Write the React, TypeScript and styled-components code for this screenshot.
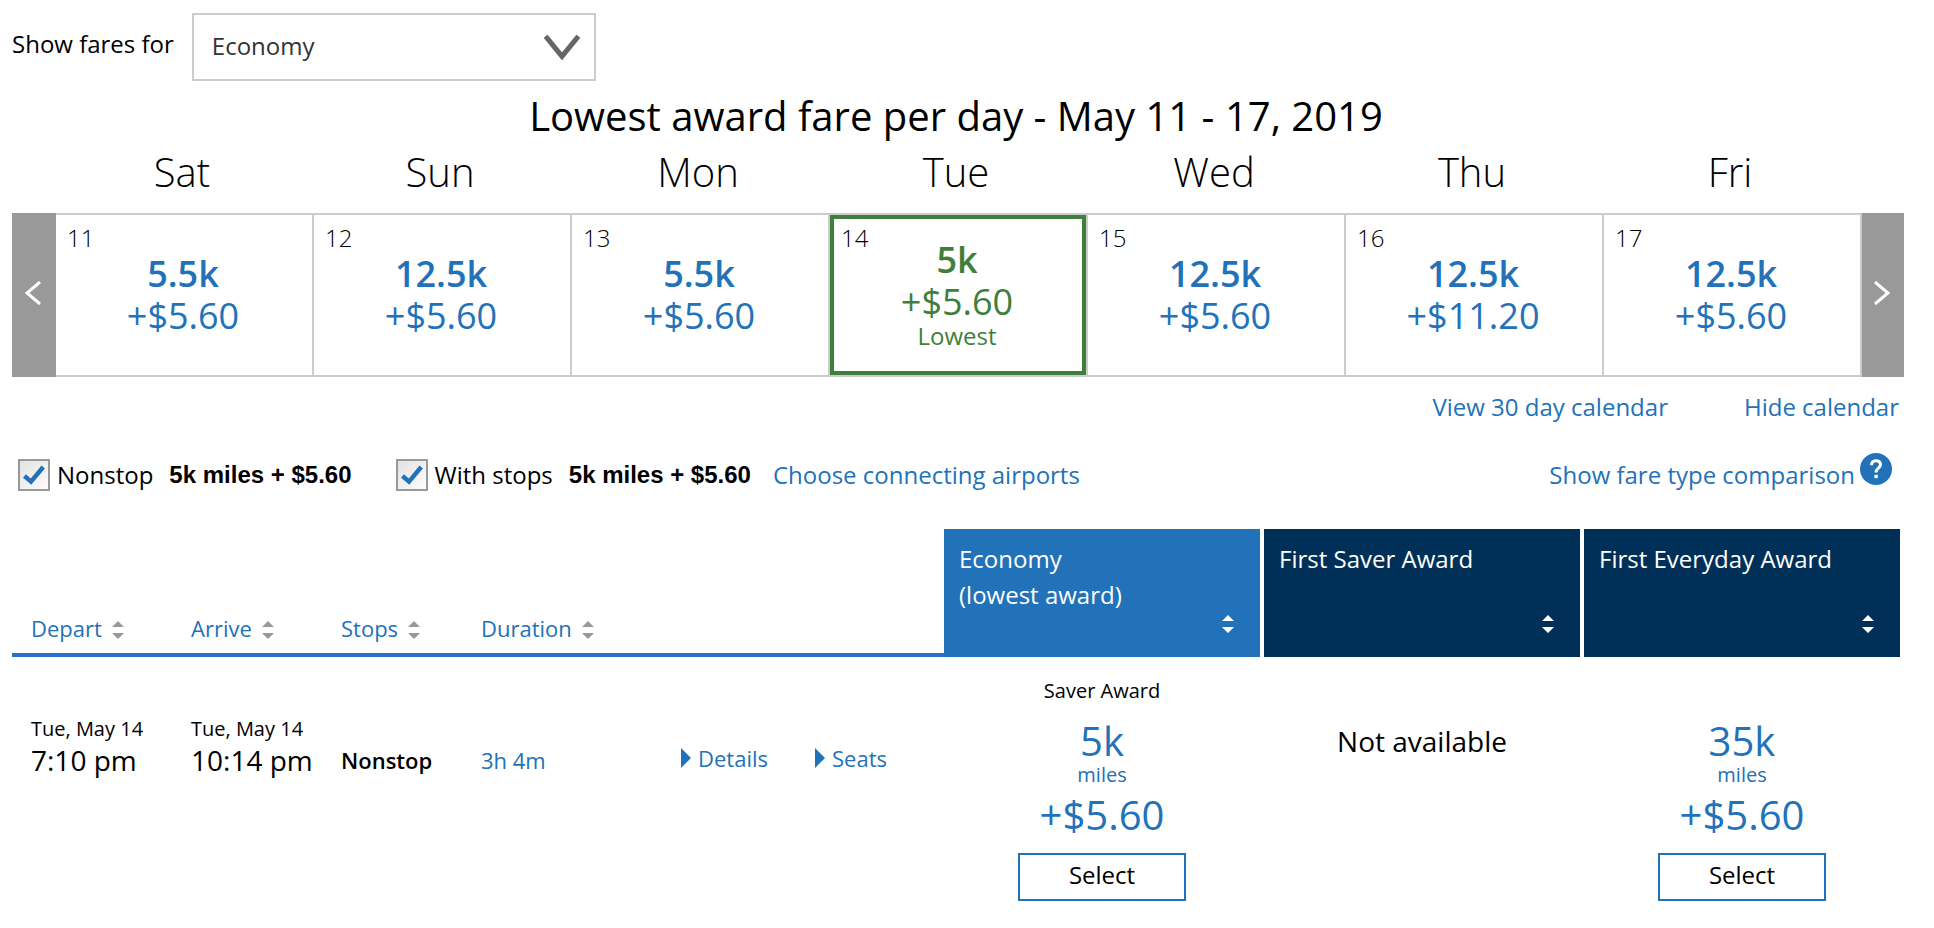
import React from 'react';
import styled, { createGlobalStyle, css } from 'styled-components';

const blue = '#2272b9';
const navy = '#003057';
const green = '#3f7f3b';
const line = '#cccccc';
const grey = '#999999';
const sans = '"Open Sans", "Noto Sans", sans-serif';

const GlobalStyle = createGlobalStyle`
  *, *::before, *::after { box-sizing: border-box; }
  body {
    margin: 0;
    background: #fff;
    color: #000;
    font: 24px/32px ${sans};
  }
  button, select { font: inherit; color: inherit; }
  button { padding: 0; border: 0; background: none; cursor: pointer; }
  a { color: ${blue}; text-decoration: none; }
  svg { display: block; flex: none; }
`;

const Page = styled.main`
  padding: 13px 34px 0 12px;
`;

const CabinRow = styled.div`
  display: flex;
  align-items: center;
  gap: 18px;
`;

const CabinLabel = styled.label`
  padding-bottom: 6px;
`;

const SelectBox = styled.div`
  position: relative;
  width: 404px;

  svg {
    position: absolute;
    top: 22px;
    right: 16px;
    pointer-events: none;
  }
`;

const CabinSelect = styled.select`
  appearance: none;
  display: block;
  width: 100%;
  height: 68px;
  padding: 0 60px 2px 18px;
  border: 2px solid ${line};
  border-radius: 0;
  background: #fff;
  color: #333;
`;

const Title = styled.h2`
  margin: 8px 0 0;
  font-size: 40px;
  line-height: 54px;
  font-weight: 400;
  text-align: center;
`;

const Calendar = styled.table`
  width: calc(100% + 4px);
  table-layout: fixed;
  border-collapse: separate;
  border-spacing: 0;
`;

const ArrowCol = styled.col<{ $w: number }>`
  width: ${(p) => p.$w}px;
`;

const DayName = styled.th`
  padding: 0 6px 12px 0;
  font-size: 40px;
  line-height: 58px;
  font-weight: 300;
  text-align: center;
`;

const ArrowCell = styled.td`
  padding: 0;
`;

const ArrowButton = styled.button`
  display: flex;
  align-items: center;
  justify-content: center;
  width: 100%;
  height: 164px;
  padding: 0 2px 4px 0;
  background: ${grey};
`;

const DayCell = styled.td`
  padding: 0;
  border: solid ${line};
  border-width: 2px 2px 2px 0;
`;

const DayButton = styled.button<{ $lowest?: boolean }>`
  display: grid;
  align-items: center;
  width: 100%;
  height: 160px;
  padding: 9px 0;
  color: ${(p) => (p.$lowest ? green : blue)};
  ${(p) => p.$lowest && css`box-shadow: inset 0 0 0 4px ${green};`}
`;

const DayNumber = styled.span`
  grid-area: 1 / 1;
  align-self: start;
  padding-left: 11px;
  line-height: 28px;
  font-weight: 300;
  color: #000;
  text-align: left;
`;

const DayFare = styled.span`
  grid-area: 1 / 1;
  display: flex;
  flex-direction: column;
  align-items: center;
  padding-right: 2px;
  font-size: 36px;
  line-height: 42px;
`;

const Miles = styled.strong`
  font-weight: 600;
`;

const LowestTag = styled.span`
  margin-bottom: 2px;
  font-size: 24px;
  line-height: 26px;
`;

const CalendarLinks = styled.nav`
  display: flex;
  justify-content: flex-end;
  gap: 76px;
  margin-top: 14px;
  padding-right: 1px;
`;

const Filters = styled.div`
  display: flex;
  align-items: center;
  margin-top: 30px;
  padding: 0 8px 0 6px;
`;

const CheckLabel = styled.label`
  display: flex;
  align-items: center;
  gap: 7px;
`;

const CheckBox = styled.span`
  position: relative;
  width: 32px;
  height: 32px;

  svg {
    position: absolute;
    top: 0;
    left: 0;
    pointer-events: none;
    visibility: hidden;
  }
  input:checked + svg { visibility: visible; }
`;

const CheckInput = styled.input`
  appearance: none;
  display: block;
  width: 32px;
  height: 32px;
  margin: 0;
  border: 2px solid ${grey};
  background: linear-gradient(135deg, #e2e2e2, #fdfdfd);
`;

const FilterFare = styled.strong`
  margin: 0 44px 0 16px;
  font-family: "Liberation Sans", Arial, sans-serif;
  font-weight: 700;

  &:has(+ a) { margin-right: 22px; }
`;

const CompareLink = styled.a`
  display: flex;
  align-items: center;
  gap: 5px;
  margin: 0 0 0 auto;

  svg { margin-bottom: 12px; }
`;

const Flights = styled.table`
  width: 100%;
  margin-top: 32px;
  table-layout: fixed;
  border-collapse: separate;
  border-spacing: 0;
`;

const Col = styled.col<{ $w: number }>`
  width: ${(p) => p.$w}px;
`;

const PlainHead = styled.th`
  height: 128px;
  padding: 0 0 10px 19px;
  border-bottom: 4px solid #2672c8;
  vertical-align: bottom;
  text-align: left;
  font-weight: 400;
`;

const SortButton = styled.button`
  display: flex;
  align-items: center;
  gap: 10px;
  font-size: 22px;
  line-height: 30px;
  color: ${blue};

  svg { margin-top: 4px; color: ${grey}; }
`;

const FareHead = styled.th<{ $lowest?: boolean }>`
  padding: 0;
  border-left: ${(p) => (p.$lowest ? 0 : 4)}px solid #fff;
  background: ${(p) => (p.$lowest ? blue : navy)};
  background-clip: padding-box;
  color: #fff;
  font-weight: 400;
`;

const FareSortButton = styled.button`
  display: flex;
  flex-direction: column;
  justify-content: space-between;
  width: 100%;
  height: 128px;
  padding: 12px 26px 24px 15px;
  line-height: 36px;
  text-align: left;

  svg { align-self: flex-end; }
`;

const Cell = styled.td<{ $top: number }>`
  padding: ${(p) => p.$top}px 0 0 19px;
  vertical-align: top;
  font-size: 22px;
  line-height: 30px;
`;

const FlightDate = styled.div`
  font-size: 20px;
  line-height: 28px;
`;

const FlightTime = styled.div`
  font-size: 28px;
  line-height: 34px;
`;

const Stops = styled.strong`
  font-weight: 600;
`;

const Toggle = styled.a`
  display: flex;
  align-items: center;
  gap: 7px;
`;

const FareCell = styled.td`
  padding: 20px 0 0;
  vertical-align: top;

  & + & { padding-left: 4px; }
`;

const FareStack = styled.div`
  display: flex;
  flex-direction: column;
  align-items: center;
  color: ${blue};
`;

const FareKind = styled.span`
  height: 28px;
  margin-bottom: 14px;
  font-size: 20px;
  line-height: 28px;
  color: #000;
`;

const FareMiles = styled.span`
  font-size: 40px;
  line-height: 44px;
`;

const FareUnit = styled.span`
  font-size: 20px;
  line-height: 24px;
`;

const FarePrice = styled.span`
  font-size: 40px;
  line-height: 56px;
`;

const Unavailable = styled.span`
  font-size: 28px;
  line-height: 44px;
  color: #000;
`;

const SelectButton = styled.button`
  width: 168px;
  height: 48px;
  margin-top: 10px;
  padding-bottom: 4px;
  border: 2px solid ${blue};
  color: #000;
`;

const ChevronDown = () => (
  <svg width="36" height="25" viewBox="0 0 36 25" aria-hidden="true">
    <path d="M1.6 1.2 18 21.4 34.4 1.2" fill="none" stroke="#666" strokeWidth="5" />
  </svg>
);

const Arrow = ({ next }: { next?: boolean }) => (
  <svg width="16" height="24" viewBox="0 0 16 24" aria-hidden="true">
    <path
      d={next ? 'M1 1 14 12 1 23' : 'M15 1 2 12 15 23'}
      fill="none"
      stroke="#fff"
      strokeWidth="3"
    />
  </svg>
);

const SortIcon = () => (
  <svg width="12" height="18" viewBox="0 0 12 18" fill="currentColor" aria-hidden="true">
    <path d="M0 6 6 0 12 6ZM0 12H12L6 18Z" />
  </svg>
);

const Caret = () => (
  <svg width="10" height="20" viewBox="0 0 10 20" fill={blue} aria-hidden="true">
    <path d="M0 0 10 10 0 20Z" />
  </svg>
);

const Tick = () => (
  <svg width="32" height="32" viewBox="0 0 32 32" aria-hidden="true">
    <path d="M6.5 17 13 22.6 25.2 8" fill="none" stroke={blue} strokeWidth="4.4" />
  </svg>
);

const HelpIcon = () => (
  <svg width="32" height="32" viewBox="0 0 32 32" aria-hidden="true">
    <circle cx="16" cy="16" r="16" fill={blue} />
    <path
      d="M11.5 12.2C11.5 9.300 13.300 7.700 16 7.700s4.500 1.500 4.500 4c0 3.500-4.500 3.600-4.500 7.700"
      fill="none"
      stroke="#fff"
      strokeWidth="3"
    />
    <rect x="14.400" y="21.800" width="3.400" height="3.400" fill="#fff" />
  </svg>
);

const days = [
  { name: 'Sat', date: 11, miles: '5.5k', price: '+$5.60' },
  { name: 'Sun', date: 12, miles: '12.5k', price: '+$5.60' },
  { name: 'Mon', date: 13, miles: '5.5k', price: '+$5.60' },
  { name: 'Tue', date: 14, miles: '5k', price: '+$5.60', lowest: true },
  { name: 'Wed', date: 15, miles: '12.5k', price: '+$5.60' },
  { name: 'Thu', date: 16, miles: '12.5k', price: '+$11.20' },
  { name: 'Fri', date: 17, miles: '12.5k', price: '+$5.60' },
];

const columnWidths = [160, 150, 140, 200, 134, 148, 316, 320, 320];
const sortColumns = ['Depart', 'Arrive', 'Stops', 'Duration'];

const Filter = ({ label, fare }: { label: string; fare: string }) => (
  <>
    <CheckLabel>
      <CheckBox>
        <CheckInput type="checkbox" defaultChecked />
        <Tick />
      </CheckBox>
      {label}
    </CheckLabel>
    <FilterFare>{fare}</FilterFare>
  </>
);

const Fare = ({ kind, miles, price }: { kind?: string; miles: string; price: string }) => (
  <FareStack>
    <FareKind>{kind}</FareKind>
    <FareMiles>{miles}</FareMiles>
    <FareUnit>miles</FareUnit>
    <FarePrice>{price}</FarePrice>
    <SelectButton type="button">Select</SelectButton>
  </FareStack>
);

export default function App() {
  return (
    <>
      <GlobalStyle />
      <Page>
        <CabinRow>
          <CabinLabel htmlFor="cabin">Show fares for</CabinLabel>
          <SelectBox>
            <CabinSelect id="cabin" defaultValue="Economy">
              <option>Economy</option>
            </CabinSelect>
            <ChevronDown />
          </SelectBox>
        </CabinRow>

        <Title>Lowest award fare per day - May 11 - 17, 2019</Title>
        <Calendar>
          <colgroup>
            <ArrowCol $w={44} />
            {days.map((d) => (
              <col key={d.date} />
            ))}
            <ArrowCol $w={42} />
          </colgroup>
          <thead>
            <tr>
              <td />
              {days.map((d) => (
                <DayName key={d.date} scope="col">
                  {d.name}
                </DayName>
              ))}
              <td />
            </tr>
          </thead>
          <tbody>
            <tr>
              <ArrowCell>
                <ArrowButton type="button" aria-label="Previous week">
                  <Arrow />
                </ArrowButton>
              </ArrowCell>
              {days.map((d) => (
                <DayCell key={d.date}>
                  <DayButton type="button" $lowest={d.lowest}>
                    <DayNumber>{d.date}</DayNumber>
                    <DayFare>
                      <Miles>{d.miles}</Miles>
                      <span>{d.price}</span>
                      {d.lowest && <LowestTag>Lowest</LowestTag>}
                    </DayFare>
                  </DayButton>
                </DayCell>
              ))}
              <ArrowCell>
                <ArrowButton type="button" aria-label="Next week">
                  <Arrow next />
                </ArrowButton>
              </ArrowCell>
            </tr>
          </tbody>
        </Calendar>
        <CalendarLinks>
          <a href="#month">View 30 day calendar</a>
          <a href="#hide">Hide calendar</a>
        </CalendarLinks>

        <Filters>
          <Filter label="Nonstop" fare="5k miles + $5.60" />
          <Filter label="With stops" fare="5k miles + $5.60" />
          <a href="#airports">Choose connecting airports</a>
          <CompareLink href="#compare">
            Show fare type comparison
            <HelpIcon />
          </CompareLink>
        </Filters>

        <Flights>
          <colgroup>
            {columnWidths.map((w, i) => (
              <Col key={i} $w={w} />
            ))}
          </colgroup>
          <thead>
            <tr>
              {sortColumns.map((name) => (
                <PlainHead key={name} scope="col">
                  <SortButton type="button">
                    {name}
                    <SortIcon />
                  </SortButton>
                </PlainHead>
              ))}
              <PlainHead as="td" colSpan={2} />
              <FareHead scope="col" $lowest>
                <FareSortButton type="button">
                  <span>
                    Economy
                    <br />
                    (lowest award)
                  </span>
                  <SortIcon />
                </FareSortButton>
              </FareHead>
              {['First Saver Award', 'First Everyday Award'].map((name) => (
                <FareHead key={name} scope="col">
                  <FareSortButton type="button">
                    <span>{name}</span>
                    <SortIcon />
                  </FareSortButton>
                </FareHead>
              ))}
            </tr>
          </thead>
          <tbody>
            <tr>
              <Cell $top={58}>
                <FlightDate>Tue, May 14</FlightDate>
                <FlightTime>7:10 pm</FlightTime>
              </Cell>
              <Cell $top={58}>
                <FlightDate>Tue, May 14</FlightDate>
                <FlightTime>10:14 pm</FlightTime>
              </Cell>
              <Cell $top={88}>
                <Stops>Nonstop</Stops>
              </Cell>
              <Cell $top={88}>
                <a href="#duration">3h 4m</a>
              </Cell>
              <Cell $top={86}>
                <Toggle href="#details">
                  <Caret />
                  Details
                </Toggle>
              </Cell>
              <Cell $top={86}>
                <Toggle href="#seats">
                  <Caret />
                  Seats
                </Toggle>
              </Cell>
              <FareCell>
                <Fare kind="Saver Award" miles="5k" price="+$5.60" />
              </FareCell>
              <FareCell>
                <FareStack>
                  <FareKind />
                  <Unavailable>Not available</Unavailable>
                </FareStack>
              </FareCell>
              <FareCell>
                <Fare miles="35k" price="+$5.60" />
              </FareCell>
            </tr>
          </tbody>
        </Flights>
      </Page>
    </>
  );
}
